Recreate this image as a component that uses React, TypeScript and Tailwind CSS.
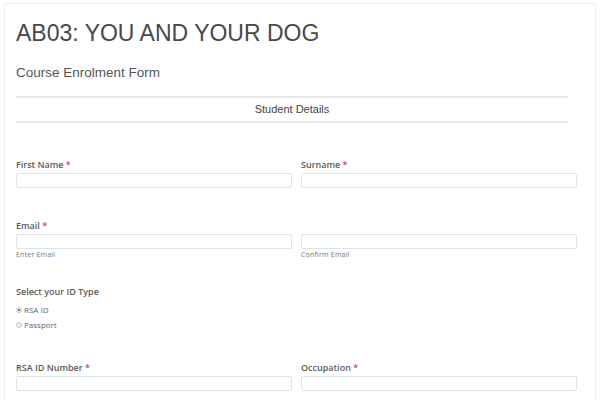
const label = "text-[9px] leading-[12px] font-semibold text-[#5a5a5a] mb-[2px]";
const input = "block w-full h-[15px] border border-[#d9e4e6] rounded-[2px] bg-white";

function Field({ name, required, help }: { name?: string; required?: boolean; help?: string }) {
  return (
    <div>
      <div className={label}>
        {name ? name : "\u00a0"}
        {required && <span className="text-[#d0454c]"> *</span>}
      </div>
      <input className={input} />
      {help && <div className="text-[7px] leading-[10px] text-[#777] mt-[1px] tracking-[0.2px]">{help}</div>}
    </div>
  );
}

function Radio({ text, checked }: { text: string; checked?: boolean }) {
  return (
    <div className="flex items-center h-[15px] gap-[2px]">
      <span className="w-[6px] h-[6px] rounded-full border border-[#c4c4c4] bg-[#eee] flex items-center justify-center">
        {checked && <span className="w-[2px] h-[2px] rounded-full bg-[#555]" />}
      </span>
      <span className="text-[8px] text-[#666]">{text}</span>
    </div>
  );
}

export default function App() {
  return (
    <div className="w-[600px] h-[400px] overflow-hidden bg-white pt-[3px] pl-[4px] pr-[4px]" style={{ fontFamily: "'Open Sans', sans-serif" }}>
      <div className="h-[420px] border border-[#efefef] pl-[11px] pr-[18px] pt-[18px]">
        <h1 className="text-[23px] leading-none text-[#484848]" style={{ fontFamily: "'Liberation Sans', sans-serif" }}>
          AB03: YOU AND YOUR DOG
        </h1>
        <p className="mt-[21px] text-[13.5px] leading-none text-[#555]" style={{ fontFamily: "'Liberation Sans', sans-serif" }}>
          Course Enrolment Form
        </p>
        <div className="mt-[16px] mr-[9px]">
          <div className="h-[2px] bg-[#e8e8e8]" />
          <div className="h-[23px] flex items-center justify-center text-[11px] text-[#444]" style={{ fontFamily: "'Liberation Sans', sans-serif" }}>
            Student Details
          </div>
          <div className="h-[2px] bg-[#e8e8e8]" />
        </div>

        <div className="mt-[36px] grid grid-cols-2 gap-x-[9px]">
          <Field name="First Name" required />
          <Field name="Surname" required />
        </div>

        <div className="mt-[32px] grid grid-cols-2 gap-x-[9px]">
          <Field name="Email" required help="Enter Email" />
          <Field help="Confirm Email" />
        </div>

        <div className="mt-[26px]">
          <div className="text-[9px] leading-[12px] font-semibold text-[#5a5a5a]">Select your ID Type</div>
          <div className="mt-[5px]">
            <Radio text="RSA ID" checked />
            <Radio text="Passport" />
          </div>
        </div>

        <div className="mt-[29px] grid grid-cols-2 gap-x-[9px]">
          <Field name="RSA ID Number" required />
          <Field name="Occupation" required />
        </div>
      </div>
    </div>
  );
}
